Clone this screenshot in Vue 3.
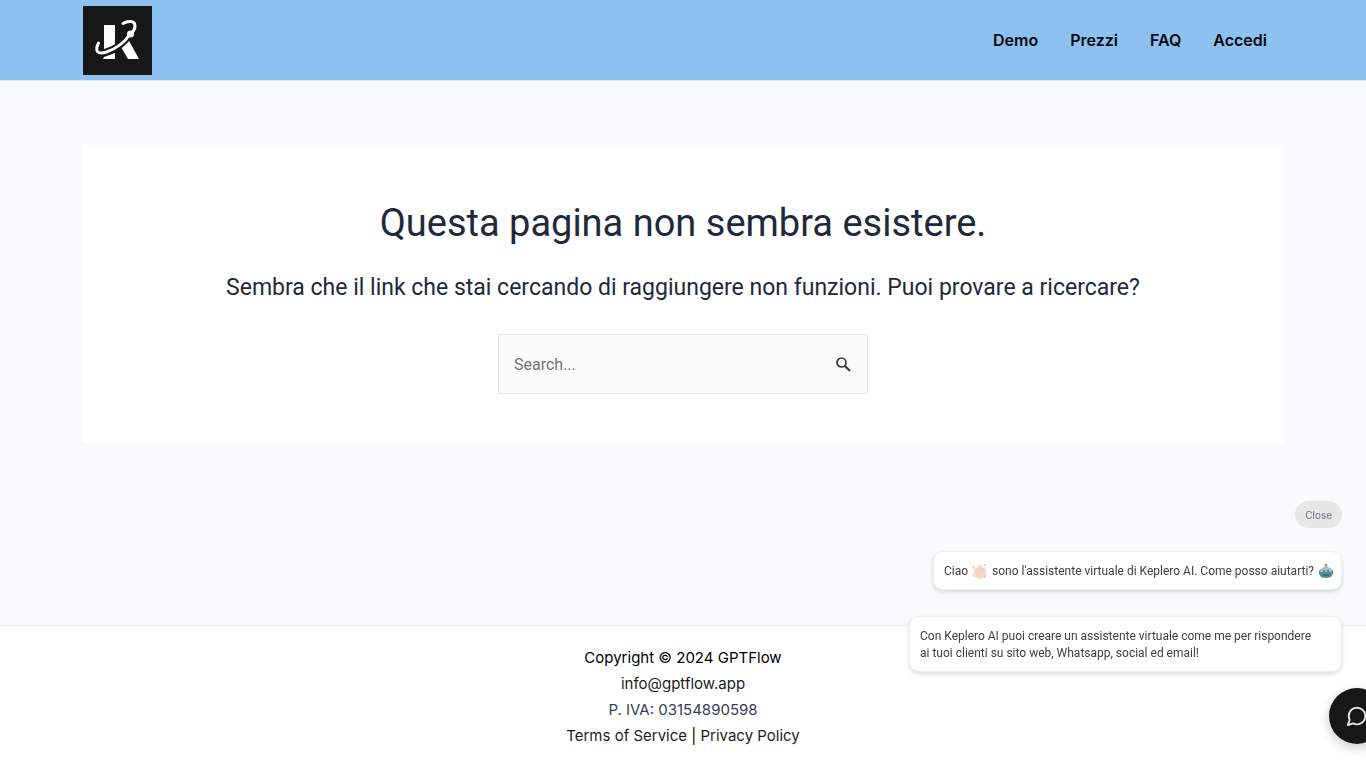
<script setup>
import { ref } from 'vue'

const links = ['Demo', 'Prezzi', 'FAQ', 'Accedi']
const query = ref('')
const showMessages = ref(true)
</script>

<template>
  <div class="page">
    <header class="header">
      <div class="container header-row">
        <a class="logo" href="#" aria-label="Keplero">
          <svg viewBox="0 0 69 69" aria-hidden="true">
            <rect width="69" height="69" fill="#171717" />
            <path d="M21 19h11v20l-5 4h-6z" fill="#fff" />
            <path d="M21 51l11-4v6H20z" fill="#fff" />
            <path d="M38 41l7-8 11 20H45z" fill="#fff" />
            <path d="M15 38c-4 8 0 11 8 8 10-3 19-10 24-18" fill="none" stroke="#171717" stroke-width="7" />
            <path d="M15.500 37c-4 8-1 12 8 9 9-3 18-10 23-17" fill="none" stroke="#fff" stroke-width="3" stroke-linecap="round" />
            <path d="M40 17.500c5-3 10-2.500 11.500 0 1.500 4 0 7-3.500 10" fill="none" stroke="#fff" stroke-width="3" stroke-linecap="round" />
            <circle cx="47.500" cy="28" r="3.500" fill="#fff" />
          </svg>
        </a>
        <nav class="nav">
          <a v-for="link in links" :key="link" href="#">{{ link }}</a>
        </nav>
      </div>
    </header>

    <main class="main container">
      <section class="card">
        <h1>Questa pagina non sembra esistere.</h1>
        <p class="lead">Sembra che il link che stai cercando di raggiungere non funzioni. Puoi provare a ricercare?</p>
        <form class="search" role="search" @submit.prevent>
          <input v-model="query" type="search" placeholder="Search..." aria-label="Search" />
          <button type="submit" aria-label="Search">
            <svg viewBox="0 0 16 16" aria-hidden="true">
              <circle cx="6.500" cy="6.500" r="4.500" fill="none" stroke="#3a3a3a" stroke-width="1.700" />
              <path d="M10 10l5 5" stroke="#3a3a3a" stroke-width="2.200" />
            </svg>
          </button>
        </form>
      </section>
    </main>

    <footer class="footer">
      <p class="black">Copyright © 2024 GPTFlow</p>
      <p><a href="#">info@gptflow.app</a></p>
      <p>P. IVA: 03154890598</p>
      <p><a href="#">Terms of Service</a> <span class="black">|</span> <a href="#">Privacy Policy</a></p>
    </footer>

    <aside v-if="showMessages" class="chat">
      <button class="close" type="button" @click="showMessages = false">Close</button>
      <p class="bubble greeting">
        Ciao
        <svg class="emoji" viewBox="0 0 16 16" aria-hidden="true">
          <path d="M2 6l2-2 2 1 1-3 2 0 2 3 2-1 1 6-1 4-4 2-4-1-4-5 1-1z" fill="#f3d9c6" />
          <path d="M4 6l5 5M6 4l5 5M9 3l3 5M3 9l4 4" stroke="#ecccb6" stroke-width="0.8" fill="none" />
          <path d="M2 3L1 5M12 1l2 2M1 12l2 2M14 12l-2 3" stroke="#a9b2b8" stroke-width="1" fill="none" />
        </svg>
        sono l'assistente virtuale di Keplero AI. Come posso aiutarti?
        <svg class="emoji" viewBox="0 0 16 16" aria-hidden="true">
          <path d="M8 2v3" stroke="#8b8584" stroke-width="1.5" />
          <circle cx="8" cy="2" r="1.5" fill="#d98370" />
          <path d="M3 6q5-4 10 0l2 2v3l-2 3q-5 2-10 0l-2-3V8z" fill="#568e9c" />
          <path d="M3 6q5-4 10 0l1 3H2z" fill="#a3c5cb" />
          <circle cx="6" cy="8" r="1" fill="#456f7a" /><circle cx="10" cy="8" r="1" fill="#456f7a" />
          <path d="M5 12h6" stroke="#356a78" stroke-width="1.5" />
        </svg>
      </p>
      <p class="bubble">Con Keplero AI puoi creare un assistente virtuale come me per rispondere ai tuoi clienti su sito web, Whatsapp, social ed email!</p>
    </aside>
    <div class="launcher-area">
      <button class="launcher" type="button" aria-label="Chat" @click="showMessages = !showMessages">
        <svg viewBox="0 0 24 24" aria-hidden="true">
          <path d="M7.9 20A9 9 0 1 0 4 16.1L2 22Z" fill="none" stroke="#e8e8e8" stroke-width="2" stroke-linecap="round" stroke-linejoin="round" />
        </svg>
      </button>
    </div>
  </div>
</template>

<style>
body {
  margin: 0;
  background: #f8fafc;
}
</style>

<style scoped>
* {
  box-sizing: border-box;
}
.page {
  display: flex;
  flex-direction: column;
  min-height: 100vh;
  font-family: Roboto, "Liberation Sans", sans-serif;
  font-size: 16px;
  color: #334155;
  background: #f8fafc;
}
h1, p {
  margin: 0;
  font-weight: 400;
}
a {
  color: #1c1c1c;
  text-decoration: none;
}
button {
  font-family: inherit;
  cursor: pointer;
}
.container {
  width: 100%;
  max-width: 1200px;
  margin: 0 auto;
}
.header {
  background: #8cc1f0;
  border-bottom: 1px solid #dce6f0;
}
.header-row {
  display: flex;
  align-items: center;
  justify-content: space-between;
  min-height: 80px;
}
.logo, .logo svg {
  display: block;
  width: 69px;
  height: 69px;
}
.nav {
  display: flex;
  gap: 32px;
  padding-right: 16px;
  font-family: Inter, "Liberation Sans", sans-serif;
}
.nav a {
  color: #05080c;
  font-weight: 600;
}
.main {
  flex: 1;
  padding: 64px 0;
}
.card {
  display: flex;
  flex-direction: column;
  align-items: center;
  padding: 50px 48px 48px;
  text-align: center;
  color: #1e293b;
  background: #fff;
}
h1 {
  font-size: 38px;
  line-height: 56px;
}
.lead {
  margin: 18px 0 27px;
  font-size: 23px;
  line-height: 38px;
}
.search {
  display: flex;
  width: 370px;
  max-width: 100%;
  height: 60px;
  background: #fafafa;
  border: 1px solid #e6e6e6;
  border-radius: 2px;
}
.search input {
  flex: 1;
  min-width: 0;
  padding: 0 15px;
  font: inherit;
  color: #666;
  background: none;
  border: 0;
  outline: 0;
}
.search input::placeholder {
  color: #757575;
}
.search button {
  display: grid;
  place-items: center;
  width: 48px;
  padding: 0;
  background: none;
  border: 0;
}
.search svg {
  width: 16px;
  height: 16px;
}
.footer {
  padding: 19px;
  font-family: Inter, "Liberation Sans", sans-serif;
  font-size: 15px;
  line-height: 26px;
  text-align: center;
  background: #fff;
  border-top: 1px solid #e9edf1;
}
.black {
  color: #000;
}
.chat {
  position: fixed;
  right: 24px;
  bottom: 96px;
  display: flex;
  flex-direction: column;
  align-items: flex-end;
  width: 433px;
  max-width: calc(100vw - 48px);
  font-size: 12px;
  line-height: 17px;
  color: #404040;
}
.close {
  height: 27px;
  margin-bottom: 23px;
  padding: 0 10px;
  font-family: Inter, "Liberation Sans", sans-serif;
  font-size: 10px;
  color: #6b7280;
  background: #e7e7e8;
  border: 0;
  border-radius: 14px;
}
.bubble {
  padding: 11px 20px 9px 10px;
  background: #fff;
  border: 1px solid #eceef0;
  border-radius: 10px;
  box-shadow: 0 2px 4px rgba(0, 0, 0, 0.14);
}
.greeting {
  margin-bottom: 26px;
  padding-right: 6px;
}
.emoji {
  width: 16px;
  height: 16px;
  margin: 0 1px;
  vertical-align: -4px;
}
.launcher-area {
  position: fixed;
  right: 0;
  bottom: 0;
  width: 37px;
  height: 104px;
  padding-top: 24px;
}
.launcher {
  display: grid;
  place-items: center;
  width: 56px;
  height: 56px;
  padding: 0;
  background: #171717;
  border: 0;
  border-radius: 50%;
  box-shadow: 0 4px 12px rgba(0, 0, 0, 0.2);
}
.launcher svg {
  width: 22px;
  height: 22px;
}
</style>
